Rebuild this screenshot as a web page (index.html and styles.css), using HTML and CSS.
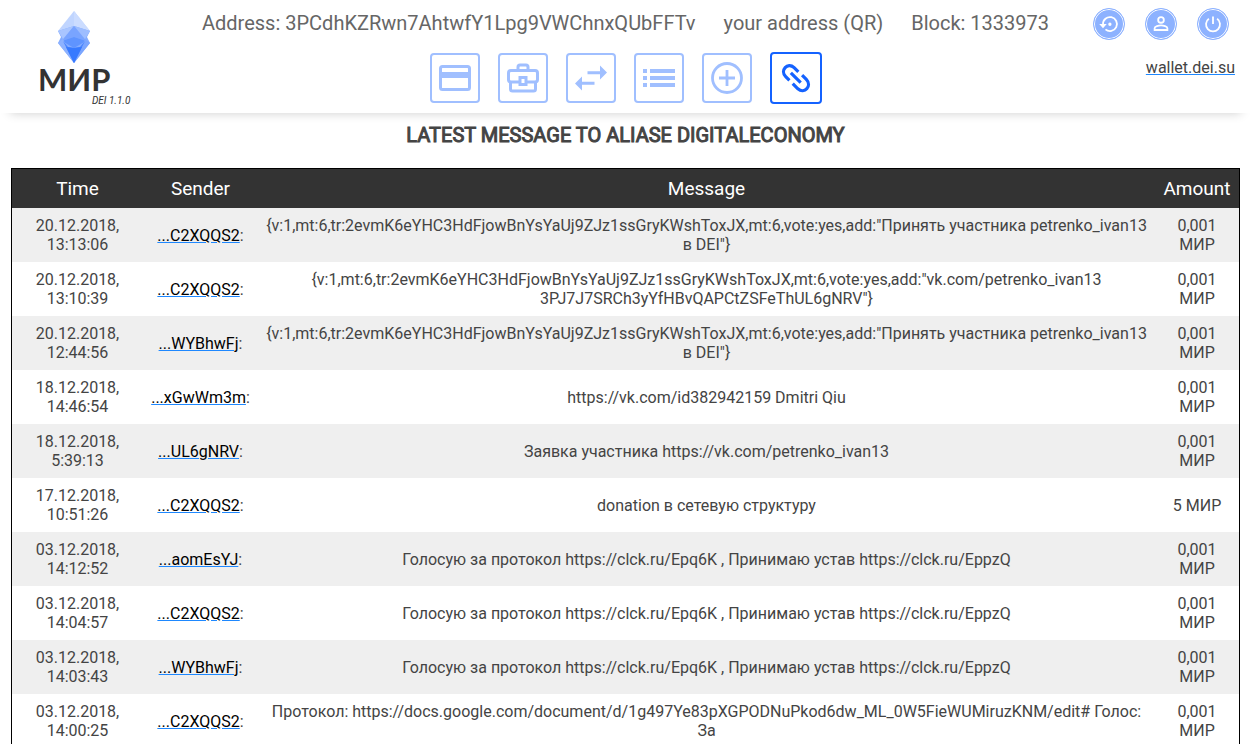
FILE: index.html
```html
<!DOCTYPE html>
<html lang="en">
<head>
<meta charset="utf-8">
<title>МИР DEI wallet</title>
<link rel="stylesheet" href="styles.css">
</head>
<body>
<header class="header">
  <div class="brand">
    <svg class="brand-gem" viewBox="0 0 34 52" aria-hidden="true">
      <path d="M17 0 33 20 17 42 1 20Z" fill="#c0d5ff"/>
      <path d="M17 0 33 20 17 15Z" fill="#cbdcff"/>
      <path d="M1 20 17 15 33 20 30 26 33 32 17 52 1 32 4 26Z" fill="#84acff"/>
      <path d="M1 20 17 15 6 28Z" fill="#a9c5ff"/>
      <path d="M33 20 17 15 28 28Z" fill="#9dbdff"/>
      <path d="M17 15 29 30 17 26 5 30Z" fill="#79a4ff"/>
      <path d="M5 30 17 26 29 30 17 37Z" fill="#5f94ff"/>
      <path d="M1 32 6 28 17 52Z" fill="#8db2ff"/>
      <path d="M33 32 28 28 17 52Z" fill="#7ba6ff"/>
      <path d="M6 30 11 36 17 37 23 36 28 30 17 52Z" fill="#4884ff"/>
      <path d="M9 36 17 37 25 36 17 52Z" fill="#377aff"/>
    </svg>
    <span class="brand-name">МИР</span>
    <span class="brand-version">DEI 1.1.0</span>
  </div>

  <div class="main-bar">
    <div class="account">
      <span>Address: 3PCdhKZRwn7AhtwfY1Lpg9VWChnxQUbFFTv</span>
      <span>your address (QR)</span>
      <span>Block: 1333973</span>
    </div>
    <nav class="tabs">
      <button class="tab" type="button" aria-label="Wallet">
        <svg viewBox="0 0 32 32"><rect x="1.5" y="4.5" width="29" height="23" rx="2" fill="none" stroke="currentColor" stroke-width="3"/><path d="M1 10h30v6H1z" fill="currentColor"/></svg>
      </button>
      <button class="tab" type="button" aria-label="Portfolio">
        <svg viewBox="0 0 32 32" fill="none" stroke="currentColor" stroke-width="3"><path d="M11 8V5Q11 3 13 3h6q2 0 2 2V8"/><path d="M13 20H4q-2.500 0-2.500-2.500V11Q1.500 8.500 4 8.500h24q2.500 0 2.500 2.500v6.500Q30.500 20 28 20h-9"/><path d="M3.500 20v7q0 2 2 2h21q2 0 2-2v-7"/><path d="M13 15.500h6v7h-6z"/></svg>
      </button>
      <button class="tab" type="button" aria-label="Transfer">
        <svg viewBox="0 0 32 32" fill="currentColor"><path d="M12.500 9.300H25V3.500l7 7-7 7v-5.200H12.500zM19.500 19.700H7v-5.200l-7 7 7 7v-5.800h12.500z"/></svg>
      </button>
      <button class="tab" type="button" aria-label="Transactions">
        <svg viewBox="0 0 32 32" fill="currentColor"><path d="M0 7h4v4H0zM0 14h4v4H0zM0 21h4v4H0zM7 7h25v4H7zM7 14h25v4H7zM7 21h25v4H7z"/></svg>
      </button>
      <button class="tab" type="button" aria-label="Create token">
        <svg viewBox="0 0 32 32" fill="none" stroke="currentColor" stroke-width="2.800"><circle cx="16" cy="16" r="14.500"/><path d="M16 8v16M8 16h16"/></svg>
      </button>
      <button class="tab tab-active" type="button" aria-label="Messages">
        <svg viewBox="0 0 32 32" fill="none" stroke="currentColor" stroke-width="3.400"><path d="M9 18.500 5 14.500C-1.500 8 7-1.500 14 5L18.500 9.500"/><path d="M22.500 13 27 17.500C33.500 24.500 25 33.500 18 27.500L12.500 22"/><path d="M10.500 10.500 21 21"/></svg>
      </button>
    </nav>
  </div>

  <div class="tools">
    <div class="tool-row">
      <button class="tool" type="button" aria-label="Restore">
        <svg viewBox="0 0 24 24"><path fill="none" stroke="currentColor" stroke-width="2.400" d="M4 12.500a9.300 9.300 0 1 1 3.300 6.700"/><path fill="currentColor" d="M-1 12h10l-5 5.500zM11 12.300a2.200 2.200 0 1 0 4.400 0 2.200 2.200 0 0 0-4.400 0z"/></svg>
      </button>
      <button class="tool" type="button" aria-label="Profile">
        <svg viewBox="0 0 24 24" fill="none" stroke="currentColor" stroke-width="2.400"><circle cx="12" cy="6.500" r="3.800"/><path d="M3.500 20v-2.500C3.500 15 9 13.800 12 13.800s8.500 1.200 8.500 3.700V20z"/></svg>
      </button>
      <button class="tool" type="button" aria-label="Log out">
        <svg viewBox="0 0 24 24" fill="none" stroke="currentColor" stroke-width="2.400"><path d="M12 2v10M6.500 5a9.300 9.300 0 1 0 11 0"/></svg>
      </button>
    </div>
    <a class="site-link" href="#">wallet.dei.su</a>
  </div>
</header>

<main class="content">
  <h1 class="title">LATEST MESSAGE TO ALIASE DIGITALECONOMY</h1>
  <table class="messages">
    <colgroup><col class="col-time"><col class="col-sender"><col><col class="col-amount"></colgroup>
    <thead>
      <tr><th>Time</th><th>Sender</th><th>Message</th><th>Amount</th></tr>
    </thead>
    <tbody>
      <tr><td>20.12.2018, 13:13:06</td><td><a class="sender" href="#">...C2XQQS2</a>:</td><td>{v:1,mt:6,tr:2evmK6eYHC3HdFjowBnYsYaUj9ZJz1ssGryKWshToxJX,mt:6,vote:yes,add:"Принять участника petrenko_ivan13 в DEI"}</td><td>0,001 МИР</td></tr>
      <tr><td>20.12.2018, 13:10:39</td><td><a class="sender" href="#">...C2XQQS2</a>:</td><td>{v:1,mt:6,tr:2evmK6eYHC3HdFjowBnYsYaUj9ZJz1ssGryKWshToxJX,mt:6,vote:yes,add:"vk.com/petrenko_ivan13 3PJ7J7SRCh3yYfHBvQAPCtZSFeThUL6gNRV"}</td><td>0,001 МИР</td></tr>
      <tr><td>20.12.2018, 12:44:56</td><td><a class="sender" href="#">...WYBhwFj</a>:</td><td>{v:1,mt:6,tr:2evmK6eYHC3HdFjowBnYsYaUj9ZJz1ssGryKWshToxJX,mt:6,vote:yes,add:"Принять участника petrenko_ivan13 в DEI"}</td><td>0,001 МИР</td></tr>
      <tr><td>18.12.2018, 14:46:54</td><td><a class="sender" href="#">...xGwWm3m</a>:</td><td>https://vk.com/id382942159 Dmitri Qiu</td><td>0,001 МИР</td></tr>
      <tr><td>18.12.2018, 5:39:13</td><td><a class="sender" href="#">...UL6gNRV</a>:</td><td>Заявка участника https://vk.com/petrenko_ivan13</td><td>0,001 МИР</td></tr>
      <tr><td>17.12.2018, 10:51:26</td><td><a class="sender" href="#">...C2XQQS2</a>:</td><td>donation в сетевую структуру</td><td>5 МИР</td></tr>
      <tr><td>03.12.2018, 14:12:52</td><td><a class="sender" href="#">...aomEsYJ</a>:</td><td>Голосую за протокол https://clck.ru/Epq6K , Принимаю устав https://clck.ru/EppzQ</td><td>0,001 МИР</td></tr>
      <tr><td>03.12.2018, 14:04:57</td><td><a class="sender" href="#">...C2XQQS2</a>:</td><td>Голосую за протокол https://clck.ru/Epq6K , Принимаю устав https://clck.ru/EppzQ</td><td>0,001 МИР</td></tr>
      <tr><td>03.12.2018, 14:03:43</td><td><a class="sender" href="#">...WYBhwFj</a>:</td><td>Голосую за протокол https://clck.ru/Epq6K , Принимаю устав https://clck.ru/EppzQ</td><td>0,001 МИР</td></tr>
      <tr><td>03.12.2018, 14:00:25</td><td><a class="sender" href="#">...C2XQQS2</a>:</td><td>Протокол: https://docs.google.com/document/d/1g497Ye83pXGPODNuPkod6dw_ML_0W5FieWUMiruzKNM/edit# Голос: За</td><td>0,001 МИР</td></tr>
    </tbody>
  </table>
</main>
</body>
</html>
```
FILE: styles.css
```css
* {
  box-sizing: border-box;
}

body {
  margin: 0;
  background: #fff;
  color: #444;
  font-family: Roboto, sans-serif;
  font-size: 16px;
  line-height: 19px;
}

button {
  padding: 0;
  font: inherit;
  cursor: pointer;
}

.header {
  display: grid;
  grid-template-columns: 1fr auto 1fr;
  padding: 8px 16px 6px;
  box-shadow: 0 10px 10px -10px rgba(0, 0, 0, 0.2);
}

.brand {
  display: flex;
  flex-direction: column;
  align-items: center;
  justify-self: start;
  padding: 3px 0 0 22px;
  color: #333;
}

.brand-gem {
  width: 34px;
  height: 52px;
}

.brand-name {
  font: 700 31px/32px Lato, "Noto Sans", sans-serif;
}

.brand-version {
  align-self: flex-end;
  margin-right: -20px;
  font-size: 10px;
  font-style: italic;
  line-height: 12px;
}

.main-bar {
  display: flex;
  flex-direction: column;
  align-items: center;
  gap: 14px;
}

.account {
  display: flex;
  gap: 28px;
  color: #666;
  font-size: 20px;
  line-height: 30px;
}

.tabs {
  display: flex;
  align-items: center;
  gap: 18px;
}

.tab {
  display: grid;
  place-items: center;
  width: 50px;
  height: 50px;
  border: 2px solid #a0bfff;
  border-radius: 4px;
  background: #fff;
  color: #a0bfff;
}

.tab svg {
  width: 32px;
  height: 32px;
}

.tab-active {
  width: 52px;
  height: 52px;
  border-color: #1462ff;
  color: #1462ff;
}

.tab-active svg {
  width: 30px;
  height: 30px;
}

.tools {
  display: flex;
  flex-direction: column;
  align-items: flex-end;
  gap: 18px;
}

.tool-row {
  display: flex;
  gap: 20px;
  padding-right: 6px;
}

.tool {
  display: grid;
  place-items: center;
  width: 32px;
  height: 32px;
  border: 1px solid #8db2ff;
  border-radius: 50%;
  background: #8db2ff;
  box-shadow: inset 0 0 0 1px #fff;
  color: #fff;
}

.tool svg {
  width: 18px;
  height: 18px;
  overflow: visible;
}

.site-link {
  color: #444;
  text-decoration-color: #1e88ff;
}

.content {
  padding: 0 11px;
}

.title {
  margin: 8px 0 19px;
  font-size: 20px;
  font-weight: 400;
  line-height: 28px;
  text-align: center;
  -webkit-text-stroke: 1px currentColor;
}

.messages {
  width: 100%;
  border: 1px solid #000;
  border-spacing: 0;
  table-layout: fixed;
}

.col-time {
  width: 131px;
}

.col-sender {
  width: 115px;
}

.col-amount {
  width: 84px;
}

.messages th {
  padding: 8px 0;
  background: #333;
  color: #fff;
  font-size: 19px;
  font-weight: 400;
  line-height: 23px;
}

.messages td {
  padding: 8px;
  text-align: center;
}

.messages td:first-child,
.messages td:last-child {
  padding: 8px 16px;
}

.messages tbody tr:nth-child(odd) {
  background: #efefef;
}

.sender {
  color: #000;
  text-decoration-color: #1e88ff;
}
```
